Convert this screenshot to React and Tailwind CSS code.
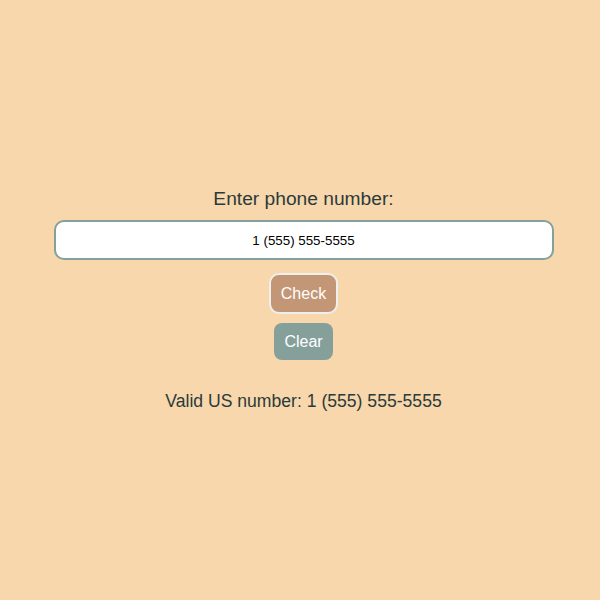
export default function App() {
    return (
        <div className="min-h-screen w-full pl-[7px] bg-[#f7d7ab] flex flex-col items-center justify-center text-[#2b3a3b]" style={{fontFamily: '"Liberation Sans", Arial, sans-serif'}}>
            <label htmlFor="phone" className="text-[19.2px] leading-[22px] mb-[10px]">
                Enter phone number:
            </label>
            <input
                id="phone"
                defaultValue="1 (555) 555-5555"
                className="w-[500px] h-[40px] bg-white border-2 border-[#83a09a] rounded-[10px] text-center text-[13.33px] text-black outline-none"
            />
            <button className="mt-[13px] px-[10px] h-[41px] bg-[#c39676] text-white text-[16px] border-2 border-[#eef0ef] rounded-[10px]">
                Check
            </button>
            <button className="mt-[9px] px-[10px] h-[37px] bg-[#85a09a] text-white text-[16px] rounded-[8px]">
                Clear
            </button>
            <div className="mt-[30px] text-[17.6px] leading-[22px]">
                Valid US number: 1 (555) 555-5555
            </div>
        </div>
    );
}
